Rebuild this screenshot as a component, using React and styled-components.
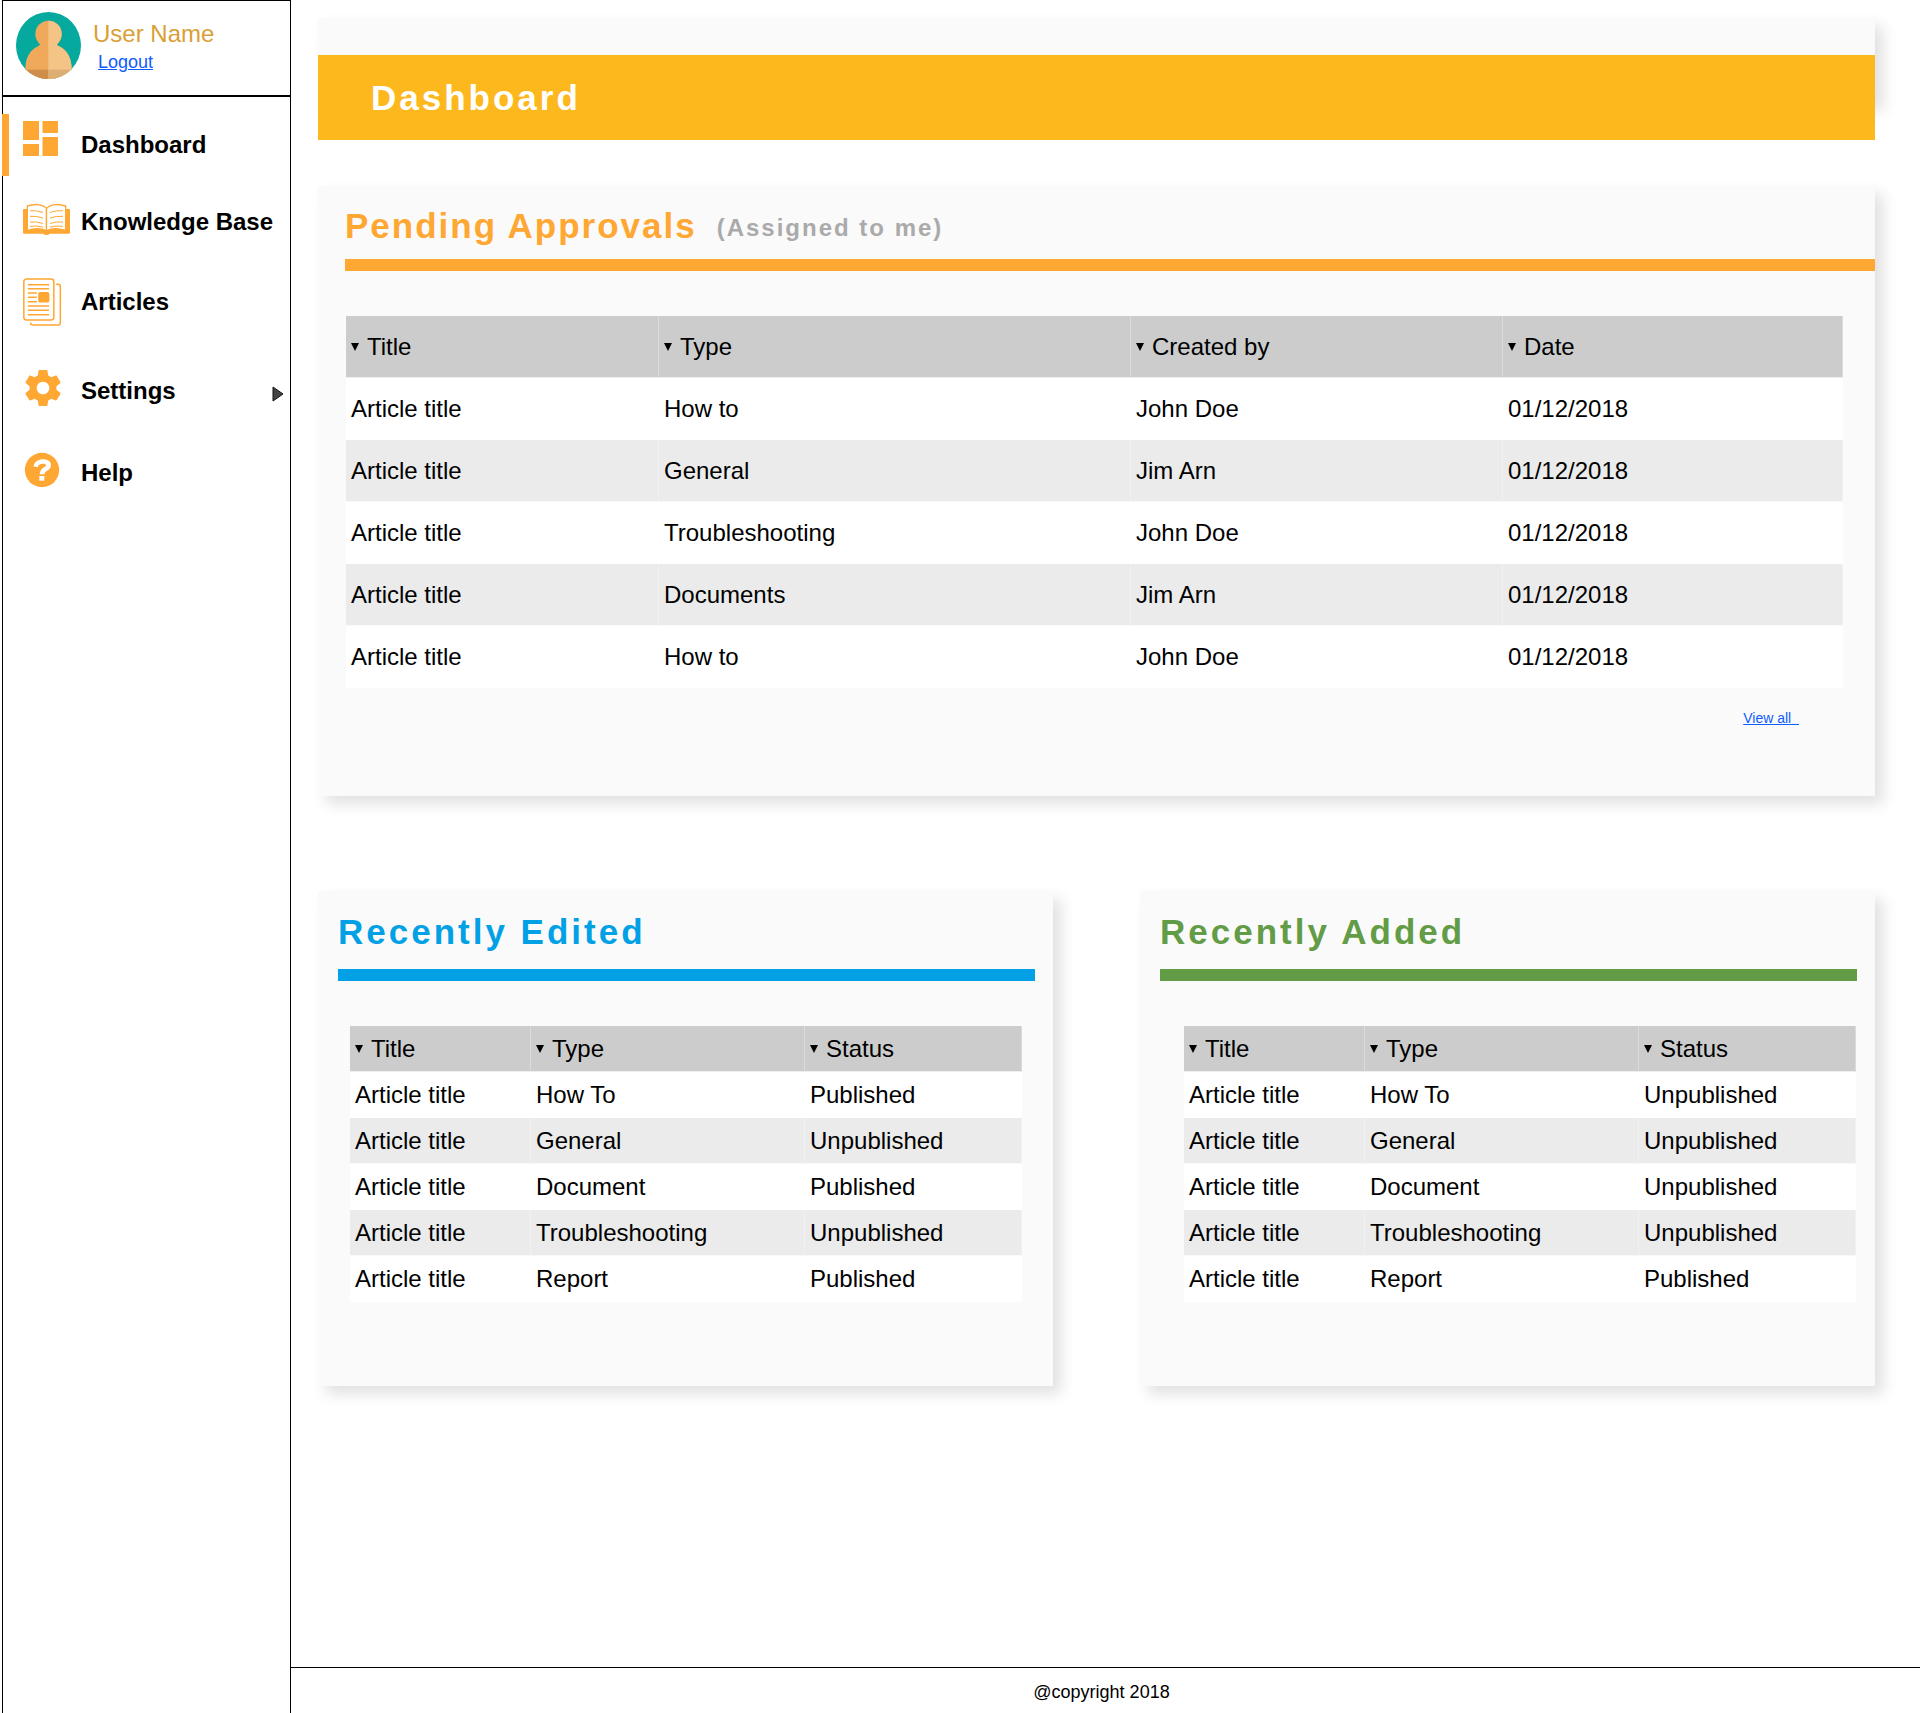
import React from "react";
import styled, { createGlobalStyle } from "styled-components";

const GlobalStyle = createGlobalStyle`
  *, *::before, *::after { box-sizing: border-box; }
  body {
    margin: 0;
    background: #fff;
    color: #000;
    font-family: "Liberation Sans", Arial, sans-serif;
    font-size: 24px;
    line-height: 28px;
  }
`;

const Page = styled.div`
  display: flex;
  min-height: 100vh;
`;

const Sidebar = styled.aside`
  flex: 0 0 289px;
  margin-left: 2px;
  border: 1px solid #000;
  border-bottom: 0;
`;

const Profile = styled.div`
  display: flex;
  gap: 12px;
  height: 96px;
  padding: 11px 13px 0;
  border-bottom: 2px solid #000;
`;

const ProfileText = styled.div`
  display: flex;
  flex-direction: column;
  padding-top: 8px;
`;

const UserName = styled.span`
  color: #d9a036;
`;

const TextLink = styled.a`
  color: #0f5cff;
  text-decoration: underline;
`;

const Logout = styled(TextLink)`
  margin-left: 5px;
  font-size: 18px;
`;

const NavList = styled.ul`
  margin: 0;
  padding: 17px 0 0;
  list-style: none;
`;

const NavItem = styled.li`
  margin-bottom: ${(p) => p.$space}px;
`;

const NavLink = styled.a`
  display: flex;
  align-items: center;
  height: 62px;
  margin-left: -1px;
  padding: 0 6px 0 ${(p) => (p.$active ? 14 : 21)}px;
  border-left: ${(p) => (p.$active ? "7px solid #ffa733" : "0")};
  color: #000;
  font-weight: bold;
  text-decoration: none;
`;

const NavIcon = styled.svg`
  flex: none;
  width: 48px;
  height: 48px;
  margin-right: 10px;
  color: #ffa733;
`;

const Arrow = styled.svg`
  width: 12px;
  height: 22px;
  margin-left: auto;
`;

const Content = styled.div`
  flex: 1;
  min-width: 0;
  display: flex;
  flex-direction: column;
`;

const Main = styled.main`
  flex: 1;
  padding: 18px 45px 48px 27px;
`;

const shadow = "8px 8px 14px rgba(0, 0, 0, 0.12)";

const TitleCard = styled.header`
  height: 85px;
  margin-bottom: 83px;
  padding-top: 37px;
  background: #fafafa;
  box-shadow: ${shadow};
`;

const TitleBand = styled.h1`
  display: flex;
  align-items: center;
  height: 85px;
  margin: 0;
  padding-left: 53px;
  background: #fdb81e;
  color: #fff;
  font-size: 35px;
  letter-spacing: 3px;
`;

const Card = styled.section`
  padding: ${(p) => p.$padding};
  background: #fafafa;
  box-shadow: ${shadow};
`;

const CardHeading = styled.div`
  display: flex;
  align-items: center;
  gap: 20px;
  padding-bottom: ${(p) => p.$below}px;
  color: ${(p) => p.$color};
`;

const CardTitle = styled.h2`
  margin: 0;
  font-size: 35px;
  line-height: 41px;
  letter-spacing: ${(p) => p.$tracking}px;
`;

const CardNote = styled.span`
  padding-top: 5px;
  color: #aaa;
  font-weight: bold;
  letter-spacing: 2px;
`;

const Rule = styled.div`
  height: 12px;
  margin-bottom: 45px;
  background: ${(p) => p.$color};
`;

const TableArea = styled.div`
  margin: ${(p) => p.$margin};
`;

const Table = styled.table`
  width: 100%;
  table-layout: fixed;
  border-collapse: separate;
  border-spacing: 0;

  th,
  td {
    height: ${(p) => p.$rowHeight}px;
    padding: 1px 5px 0;
    border-right: 1px solid rgba(255, 255, 255, 0.3);
    border-bottom: 1px solid rgba(255, 255, 255, 0.7);
    text-align: left;
    font-weight: normal;
  }

  th {
    background: #ccc;
  }

  tbody tr:nth-child(odd) td {
    background: #fff;
  }

  tbody tr:nth-child(even) td {
    background: #ebebeb;
  }
`;

const Col = styled.col`
  width: ${(p) => p.$width}px;
`;

const SortButton = styled.button`
  display: flex;
  align-items: center;
  gap: 8px;
  padding: 0;
  border: 0;
  background: none;
  color: inherit;
  font: inherit;
  cursor: pointer;
`;

const SortMark = styled.span`
  border-top: 8px solid #000;
  border-left: 4px solid transparent;
  border-right: 4px solid transparent;
`;

const ViewAll = styled.div`
  margin: 22px 76px 0 0;
  text-align: right;
  font-size: 14px;
  line-height: 16px;
`;

const Columns = styled.div`
  display: grid;
  grid-template-columns: 1fr 1fr;
  gap: 87px;
  margin-top: 95px;
`;

const Footer = styled.footer`
  height: 46px;
  padding: 10px 8px 0 0;
  border-top: 1px solid #000;
  text-align: center;
  font-size: 18px;
`;

const AvatarSvg = styled.svg`
  flex: none;
  width: 65px;
  height: 67px;
`;

function Avatar() {
  return (
    <AvatarSvg viewBox="0 0 195 201" role="img" aria-label="User avatar">
      <defs>
        <clipPath id="avatar-disc">
          <ellipse cx="97.5" cy="100.5" rx="97.5" ry="100.5" />
        </clipPath>
        <clipPath id="avatar-right">
          <rect x="97" y="0" width="98" height="201" />
        </clipPath>
      </defs>
      <g clipPath="url(#avatar-disc)">
        <rect width="195" height="201" fill="#05a99d" />
        <g fill="#f0a85b">
          <ellipse cx="97.5" cy="66" rx="39.5" ry="40" />
          <path d="M66 88Q78 98 66 103C42 114 28 138 28 170V201H167V170C167 138 153 114 129 103Q117 98 129 88Z" />
        </g>
        <g fill="#f4c386" clipPath="url(#avatar-right)">
          <ellipse cx="97.5" cy="66" rx="39.5" ry="40" />
          <path d="M66 88Q78 98 66 103C42 114 28 138 28 170V201H167V170C167 138 153 114 129 103Q117 98 129 88Z" />
        </g>
        <rect x="28" y="173" width="69" height="28" fill="#cf8f4b" />
        <rect x="97" y="173" width="70" height="28" fill="#dcae73" />
      </g>
    </AvatarSvg>
  );
}

function DashboardIcon() {
  return (
    <NavIcon viewBox="0 0 48 48" fill="currentColor" aria-hidden="true">
      <path d="M0 0H16V19H0zM19.500 0H35V12H19.500zM0 23H16V35H0zM19.500 16H35V35H19.500z" />
    </NavIcon>
  );
}

function BookIcon() {
  return (
    <NavIcon viewBox="0 0 144 144" fill="none" stroke="currentColor" strokeLinecap="round" aria-hidden="true">
      <path
        fill="currentColor"
        stroke="none"
        d="M2 33H139Q141 33 141 35V104Q141 107 138 107H80Q78 111 70.500 111Q63 111 61 107H3Q0 107 0 104V35Q0 33 2 33Z"
      />
      <g fill="#fff" strokeWidth="4" strokeLinejoin="round">
        <path d="M13 24C32 17 58 17 70.500 31V99C58 91 34 91 13 97Z" />
        <path d="M128 24C109 17 83 17 70.500 31V99C83 91 107 91 128 97Z" />
      </g>
      <g strokeWidth="3">
        <path d="M22 38Q42 37 59 43M22 55Q42 53 59 60M22 72Q42 70 59 76M22 85Q42 82 59 87" />
        <path d="M119 38Q99 37 82 43M119 55Q99 53 82 60M119 72Q99 70 82 76M119 85Q99 82 82 87" />
      </g>
    </NavIcon>
  );
}

function ArticlesIcon() {
  return (
    <NavIcon viewBox="0 0 144 144" fill="none" stroke="currentColor" strokeWidth="4.500" strokeLinecap="round" aria-hidden="true">
      <rect x="2.500" y="3" width="90" height="123" rx="8" />
      <path d="M101 19H106Q112 19 112 26V134Q112 141 105 141H30Q23 141 23 135" />
      <path d="M16 20H77M16 32H77M16 45H40M16 58H40M16 71H40M16 84H77M16 97H77M16 110H77" />
      <rect x="48" y="44" width="29" height="27" rx="3" fill="currentColor" />
    </NavIcon>
  );
}

function SettingsIcon() {
  return (
    <NavIcon viewBox="0 0 48 48" fill="currentColor" aria-hidden="true">
      <g transform="translate(-1.600 -0.600) scale(1.800)">
        <path d="M19.430 12.980c.04-.32.07-.64.07-.98s-.03-.66-.07-.98l2.110-1.650c.19-.15.24-.42.12-.64l-2-3.460c-.12-.22-.39-.3-.61-.22l-2.490 1c-.52-.4-1.080-.73-1.690-.98l-.38-2.650C14.460 2.180 14.250 2 14 2h-4c-.25 0-.46.18-.49.42l-.38 2.650c-.61.25-1.170.59-1.690.98l-2.490-1c-.23-.09-.49 0-.61.22l-2 3.460c-.13.22-.07.49.12.64l2.110 1.650c-.04.32-.07.65-.07.98s.03.66.07.98l-2.110 1.650c-.19.15-.24.42-.12.64l2 3.460c.12.22.39.3.61.22l2.490-1c.52.4 1.080.73 1.690.98l.38 2.650c.03.24.24.42.49.42h4c.25 0 .46-.18.49-.42l.38-2.650c.61-.25 1.170-.59 1.690-.98l2.490 1c.23.09.49 0 .61-.22l2-3.460c.12-.22.07-.49-.12-.64l-2.110-1.650zM12 15.500c-1.930 0-3.500-1.570-3.500-3.500s1.570-3.500 3.500-3.500 3.500 1.570 3.500 3.500-1.570 3.500-3.500 3.500z" />
      </g>
    </NavIcon>
  );
}

function HelpIcon() {
  return (
    <NavIcon viewBox="0 0 144 144" fill="none" aria-hidden="true">
      <circle cx="57" cy="63" r="51.500" fill="currentColor" />
      <path d="M38 53C40 33 78 33 77 49C76 62 57 59 57 76" stroke="#fff" strokeWidth="14" />
      <rect x="49" y="81" width="15" height="14" fill="#fff" />
    </NavIcon>
  );
}

function SubmenuArrow() {
  return (
    <Arrow viewBox="0 0 12 22" aria-hidden="true">
      <path d="M1 7V21L11 14Z" fill="#444" stroke="#111" strokeLinejoin="round" />
    </Arrow>
  );
}

const navItems = [
  { label: "Dashboard", icon: DashboardIcon, active: true, space: 15 },
  { label: "Knowledge Base", icon: BookIcon, space: 18 },
  { label: "Articles", icon: ArticlesIcon, space: 27 },
  { label: "Settings", icon: SettingsIcon, submenu: true, space: 20 },
  { label: "Help", icon: HelpIcon, space: 0 },
];

const pending = [
  ["Article title", "How to", "John Doe", "01/12/2018"],
  ["Article title", "General", "Jim Arn", "01/12/2018"],
  ["Article title", "Troubleshooting", "John Doe", "01/12/2018"],
  ["Article title", "Documents", "Jim Arn", "01/12/2018"],
  ["Article title", "How to", "John Doe", "01/12/2018"],
];

const edited = [
  ["Article title", "How To", "Published"],
  ["Article title", "General", "Unpublished"],
  ["Article title", "Document", "Published"],
  ["Article title", "Troubleshooting", "Unpublished"],
  ["Article title", "Report", "Published"],
];

const added = [
  ["Article title", "How To", "Unpublished"],
  ["Article title", "General", "Unpublished"],
  ["Article title", "Document", "Unpublished"],
  ["Article title", "Troubleshooting", "Unpublished"],
  ["Article title", "Report", "Published"],
];

function DataTable({ columns, widths, rows, rowHeight, label }) {
  return (
    <Table $rowHeight={rowHeight} aria-label={label}>
      <colgroup>
        {widths.map((w, i) => (
          <Col key={i} $width={w} />
        ))}
      </colgroup>
      <thead>
        <tr>
          {columns.map((name) => (
            <th key={name} scope="col">
              <SortButton type="button">
                <SortMark />
                {name}
              </SortButton>
            </th>
          ))}
        </tr>
      </thead>
      <tbody>
        {rows.map((row, r) => (
          <tr key={r}>
            {row.map((cell, c) => (
              <td key={c}>{cell}</td>
            ))}
          </tr>
        ))}
      </tbody>
    </Table>
  );
}

function RecentCard({ title, color, rows, tableMargin }) {
  return (
    <Card $padding="20px 18px 84px 20px">
      <CardHeading $below={17} $color={color}>
        <CardTitle $tracking={3}>{title}</CardTitle>
      </CardHeading>
      <Rule $color={color} />
      <TableArea $margin={tableMargin}>
        <DataTable
          label={title}
          columns={["Title", "Type", "Status"]}
          widths={[181, 274, 217]}
          rows={rows}
          rowHeight={46}
        />
      </TableArea>
    </Card>
  );
}

export default function App() {
  return (
    <>
      <GlobalStyle />
      <Page>
        <Sidebar>
          <Profile>
            <Avatar />
            <ProfileText>
              <UserName>User Name</UserName>
              <Logout href="#logout">Logout</Logout>
            </ProfileText>
          </Profile>
          <nav aria-label="Main">
            <NavList>
              {navItems.map(({ label, icon: Icon, active, submenu, space }) => (
                <NavItem key={label} $space={space}>
                  <NavLink href="#" $active={active} aria-current={active ? "page" : undefined}>
                    <Icon />
                    {label}
                    {submenu && <SubmenuArrow />}
                  </NavLink>
                </NavItem>
              ))}
            </NavList>
          </nav>
        </Sidebar>
        <Content>
          <Main>
            <TitleCard>
              <TitleBand>Dashboard</TitleBand>
            </TitleCard>
            <Card $padding="19px 0 70px 27px">
              <CardHeading $below={13} $color="#ffa733">
                <CardTitle $tracking={2}>Pending Approvals</CardTitle>
                <CardNote>(Assigned to me)</CardNote>
              </CardHeading>
              <Rule $color="#ffa733" />
              <TableArea $margin="0 32px 0 1px">
                <DataTable
                  label="Pending Approvals"
                  columns={["Title", "Type", "Created by", "Date"]}
                  widths={[313, 472, 372, 340]}
                  rows={pending}
                  rowHeight={62}
                />
              </TableArea>
              <ViewAll>
                <TextLink href="#pending">View all&nbsp;&nbsp;</TextLink>
              </ViewAll>
            </Card>
            <Columns>
              <RecentCard title="Recently Edited" color="#02a1e6" rows={edited} tableMargin="0 13px 0 12px" />
              <RecentCard title="Recently Added" color="#639c46" rows={added} tableMargin="0 1px 0 24px" />
            </Columns>
          </Main>
          <Footer>@copyright 2018</Footer>
        </Content>
      </Page>
    </>
  );
}
